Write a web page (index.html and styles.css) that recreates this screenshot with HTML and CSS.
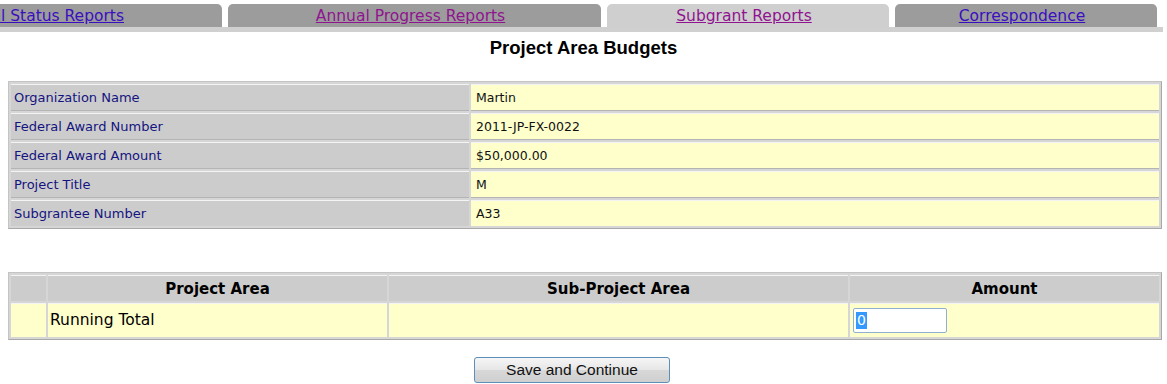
FILE: index.html
```html
<!DOCTYPE html>
<html>
<head>
<meta charset="utf-8">
<link rel="stylesheet" href="styles.css">
</head>
<body>
<div class="tabs-wrap">
  <div class="tabs">
    <div class="tab tab-first"><a class="lnk" href="#">Financial Status Reports</a></div>
    <div class="tab tab-2"><a class="lnk visited" href="#">Annual Progress Reports</a></div>
    <div class="tab tab-3 active"><a class="lnk visited" href="#">Subgrant Reports</a></div>
    <div class="tab tab-4"><a class="lnk" href="#">Correspondence</a></div>
  </div>
  <div class="tab-bar"></div>
</div>

<h1 class="title">Project Area Budgets</h1>

<table class="info">
  <tr><td class="lbl">Organization Name</td><td class="val">Martin</td></tr>
  <tr><td class="lbl">Federal Award Number</td><td class="val">2011-JP-FX-0022</td></tr>
  <tr><td class="lbl">Federal Award Amount</td><td class="val">$50,000.00</td></tr>
  <tr><td class="lbl">Project Title</td><td class="val">M</td></tr>
  <tr><td class="lbl">Subgrantee Number</td><td class="val">A33</td></tr>
</table>

<table class="budget">
  <tr class="head">
    <th class="c0"></th>
    <th class="c1">Project Area</th>
    <th class="c2">Sub-Project Area</th>
    <th class="c3">Amount</th>
  </tr>
  <tr class="body">
    <td></td>
    <td>Running Total</td>
    <td></td>
    <td><span class="amount"><span class="sel">0</span></span></td>
  </tr>
</table>

<div class="actions">
  <button class="btn" type="button">Save and Continue</button>
</div>
</body>
</html>
```
FILE: styles.css
```css
html, body {
  margin: 0;
  padding: 0;
  background: #ffffff;
}
body {
  font-family: "DejaVu Sans", Verdana, sans-serif;
  overflow: hidden;
}
.tabs-wrap {
  padding-top: 4px;
  width: 1163px;
}
.tabs {
  display: flex;
  gap: 6px;
  margin-left: -150px;
  height: 23px;
}
.tab {
  height: 23px;
  background: #9c9c9c;
  border-top-left-radius: 5px;
  border-top-right-radius: 5px;
  display: flex;
  align-items: center;
  justify-content: center;
  padding-right: 8px;
  box-sizing: border-box;
  font-size: 15.5px;
  white-space: nowrap;
  overflow: hidden;
}
.tab.active {
  background: #cfcfcf;
}
.tab-first { width: 372px; justify-content: flex-end; padding-right: 98px; }
.tab-2 { width: 373px; }
.tab-3 { width: 282px; }
.tab-4 { width: 262px; }
.lnk {
  color: #3a0fc0;
  text-decoration: underline;
  line-height: 20px;
  padding-top: 1px;
}
.lnk.visited {
  color: #8f148f;
}
.tab-bar {
  height: 5px;
  background: #d0d0d0;
}
.title {
  margin: 5px 0 0 0;
  text-align: center;
  font-family: "Liberation Sans", Arial, sans-serif;
  font-size: 18.5px;
  font-weight: bold;
  color: #000;
  line-height: 22px;
}
table {
  border-collapse: separate;
  border-spacing: 2px;
  background: #d6d6d6;
  border: 1px solid #a8a8a8;
  border-top-color: #c4c4c4;
  border-left-color: #c4c4c4;
  margin-left: 8px;
  width: 1154px;
}
td, th {
  padding: 0;
  box-shadow: inset 0 1px 0 #f4f4f4;
}
.info {
  margin-top: 22px;
}
.info td {
  height: 26px;
  padding-left: 3px;
  border-bottom: 1px solid #b4b4b4;
}
.info tr:last-child td { border-bottom: 0; }
.info .lbl {
  width: 455px;
  background: #cccccc;
  color: #141480;
  font-size: 13px;
}
.info .val {
  background: #ffffcc;
  color: #111;
  padding-left: 5px;
  font-size: 12.5px;
}
.budget {
  margin-top: 43px;
}
.budget th {
  height: 24px;
  background: #cccccc;
  font-size: 15px;
  font-weight: bold;
  color: #000;
  text-align: center;
  padding-top: 2px;
}
.budget .c0 { width: 35px; }
.budget .c1 { width: 339px; }
.budget .c2 { width: 459px; }
.budget td {
  height: 34px;
  background: #ffffcc;
  font-size: 15.5px;
  color: #000;
  padding-left: 2px;
}
.budget td:last-child { padding-left: 3px; }
.amount {
  display: inline-block;
  width: 94px;
  height: 25px;
  box-sizing: border-box;
  border: 1px solid #8fb0cf;
  border-radius: 2px;
  background: #fff;
  vertical-align: middle;
  padding: 3px 0 0 2px;
  font-size: 14px;
  line-height: 17px;
}
.sel {
  background: #3399ff;
  color: #fff;
  display: inline-block;
  padding: 0 1px;
}
.actions {
  text-align: center;
  margin-top: 17px;
}
.btn {
  width: 196px;
  height: 26px;
  font-family: "Liberation Sans", Arial, sans-serif;
  font-size: 15.5px;
  color: #111;
  border: 1px solid #5d8fb8;
  border-radius: 3px;
  background: linear-gradient(#f6f6f6, #e6e6e6 50%, #d8d8d8 51%, #cfcfcf);
  padding: 0;
  margin-right: 23px;
}
```
